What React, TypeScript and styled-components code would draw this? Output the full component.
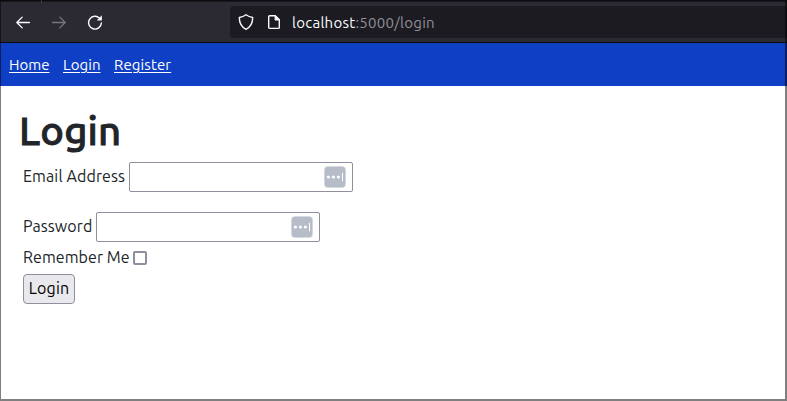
import React from "react";
import styled, { createGlobalStyle } from "styled-components";

const GlobalStyle = createGlobalStyle`
  *, *::before, *::after { box-sizing: border-box; }
  html, body { margin: 0; padding: 0; overflow: hidden; background: #fff; }
  body { font-family: Ubuntu, "Noto Sans", "Open Sans", sans-serif; font-size: 16px; color: #212529; }
`;

const Window = styled.div`
  position: relative;
  width: 787px;
  height: 401px;
  display: flex;
  flex-direction: column;
  background: #fff;
  &::after {
    content: "";
    position: absolute;
    inset: 0;
    border: solid rgba(0, 0, 0, 0.5);
    border-width: 1px 2px 2px 1px;
    pointer-events: none;
  }
`;

const BrowserBar = styled.header`
  flex: none;
  height: 43px;
  display: flex;
  align-items: center;
  padding-left: 15px;
  background: #2b2a33;
  border-top: 2px solid #18171d;
  border-bottom: 1px solid #0c0c0d;
`;

const TabEdge = styled.span`
  position: absolute;
  top: 0;
  left: 41px;
  width: 1px;
  height: 2px;
  background: #5b5a63;
`;

const ToolButton = styled.button<{ $dim?: boolean }>`
  width: 16px;
  height: 16px;
  margin: 0 20px 0 0;
  padding: 0;
  border: 0;
  background: none;
  color: ${(p) => (p.$dim ? "#77767d" : "#fbfbfe")};
  svg { display: block; }
`;

const AddressBar = styled.div`
  flex: 1;
  height: 32px;
  margin-left: 107px;
  padding-left: 8px;
  display: flex;
  align-items: center;
  border-radius: 4px 0 0 4px;
  background: #1c1b22;
  color: #fbfbfe;
  svg { flex: none; margin-right: 12px; }
`;

const Url = styled.span`
  margin: 2px 0 0 -2px;
  font-size: 15px;
  line-height: 20px;
  letter-spacing: 0.26px;
  white-space: nowrap;
`;

const UrlRest = styled.span`
  color: #8f8f96;
`;

const Nav = styled.nav`
  flex: none;
  height: 43px;
  padding: 0 0 0 9px;
  display: flex;
  align-items: center;
  gap: 13px;
  background: #0f3fc5;
`;

const NavLink = styled.a<{ $w: number; $spacing: number }>`
  width: ${(p) => p.$w}px;
  font-size: 15px;
  line-height: 20px;
  letter-spacing: ${(p) => p.$spacing}px;
  color: #fff;
  white-space: nowrap;
  text-decoration: underline;
  text-decoration-thickness: 1px;
  text-underline-offset: 2px;
`;

const Main = styled.main`
  padding: 21px 0 0 20px;
`;

const Title = styled.h1`
  margin: 0 0 0 -1px;
  height: 48px;
  font-size: 40px;
  line-height: 48px;
  font-weight: 500;
  letter-spacing: 0.2px;
  -webkit-text-stroke: 0.9px currentColor;
`;

const Form = styled.form`
  margin: 7px 0 0 3px;
`;

const Row = styled.div<{ $h: number; $gap: number }>`
  height: ${(p) => p.$h}px;
  margin-bottom: ${(p) => p.$gap}px;
  display: flex;
  align-items: center;
`;

const Label = styled.label<{ $w: number; $spacing: number }>`
  flex: none;
  width: ${(p) => p.$w}px;
  margin-bottom: 2px;
  line-height: 24px;
  letter-spacing: ${(p) => p.$spacing}px;
  white-space: nowrap;
`;

const Field = styled.div`
  width: 224px;
  height: 30px;
  display: flex;
  align-items: center;
  padding-right: 6px;
  border: 1px solid #8f8f9d;
  border-radius: 2px;
  background: #fff;
`;

const Input = styled.input`
  flex: 1;
  min-width: 0;
  height: 26px;
  border: 0;
  outline: 0;
  background: transparent;
  font: inherit;
`;

const Checkbox = styled.input`
  appearance: none;
  width: 14px;
  height: 14px;
  margin: 0;
  border: 2px solid #8f8f9d;
  border-radius: 2px;
  background: #fff;
`;

const Submit = styled.button`
  width: 52px;
  height: 30px;
  padding: 0 0 2px;
  border: 1px solid #8f8f9d;
  border-radius: 4px;
  background: #e9e9ed;
  color: #000;
  font: inherit;
  line-height: 26px;
  letter-spacing: 0.15px;
`;

const Back = () => (
  <svg width="16" height="16" viewBox="0 0 16 16" fill="none" stroke="currentColor" strokeWidth="1.3" strokeLinecap="round" strokeLinejoin="round">
    <path d="M14.4 8.500H1.800M7.200 3.100 1.800 8.500l5.400 5.400" />
  </svg>
);

const Forward = () => (
  <svg width="16" height="16" viewBox="0 0 16 16" fill="none" stroke="currentColor" strokeWidth="1.3" strokeLinecap="round" strokeLinejoin="round">
    <path d="M1.600 8.500h12.600M8.800 3.100 14.200 8.500l-5.400 5.400" />
  </svg>
);

const Reload = () => (
  <svg width="16" height="16" viewBox="0 0 16 16" fill="none">
    <path d="M12.600 4.200A6.400 6.400 0 1 0 14.400 9" stroke="currentColor" strokeWidth="1.4" strokeLinecap="round" />
    <path d="M14.900 1.300v4.600a.5.5 0 0 1-.5.5H9.800z" fill="currentColor" />
  </svg>
);

const Shield = () => (
  <svg width="16" height="16" viewBox="0 0 16 16" fill="none" stroke="currentColor" strokeWidth="1.4" strokeLinejoin="round">
    <path d="M8 .8c2 1.500 4.100 2.300 6.700 2.700C14.700 9 12.800 12.900 8 15.300 3.200 12.900 1.300 9 1.300 3.500 3.900 3.100 6 2.300 8 .8z" />
  </svg>
);

const Page = () => (
  <svg width="16" height="16" viewBox="0 0 16 16" fill="none">
    <path d="M3.700 1.700h5.500l4.100 4v7.700a1 1 0 0 1-1 1H3.700a1 1 0 0 1-1-1V2.700a1 1 0 0 1 1-1z" stroke="currentColor" strokeWidth="1.400" strokeLinejoin="round" />
    <path d="M8.600 1.200h1L13.800 5.400v1.200H9.400a.8.8 0 0 1-.8-.8z" fill="currentColor" />
  </svg>
);

const FillIcon = () => (
  <svg width="22" height="22" viewBox="0 0 22 22">
    <rect width="22" height="22" rx="4" fill="#dfe3e8" />
    <rect x="0.700" y="0.700" width="20.600" height="20.600" rx="3.500" fill="#b6bdc9" />
    <g fill="#fff">
      <circle cx="4.400" cy="11" r="1.600" />
      <circle cx="9.400" cy="11" r="1.600" />
      <circle cx="14.400" cy="11" r="1.600" />
      <rect x="18" y="6.800" width="1" height="8.400" />
    </g>
  </svg>
);

export default function App() {
  return (
    <Window>
      <GlobalStyle />
      <BrowserBar>
        <TabEdge />
        <ToolButton aria-label="Back"><Back /></ToolButton>
        <ToolButton aria-label="Forward" $dim><Forward /></ToolButton>
        <ToolButton aria-label="Reload"><Reload /></ToolButton>
        <AddressBar>
          <Shield />
          <Page />
          <Url>localhost<UrlRest>:5000/login</UrlRest></Url>
        </AddressBar>
      </BrowserBar>
      <Nav>
        <NavLink href="#" $w={41} $spacing={0}>Home</NavLink>
        <NavLink href="#" $w={38} $spacing={0.05}>Login</NavLink>
        <NavLink href="#" $w={57} $spacing={0.12}>Register</NavLink>
      </Nav>
      <Main>
        <Title>Login</Title>
        <Form onSubmit={(e) => e.preventDefault()}>
          <Row $h={30} $gap={20}>
            <Label htmlFor="email" $w={106} $spacing={0.12}>Email Address</Label>
            <Field><Input id="email" type="email" /><FillIcon /></Field>
          </Row>
          <Row $h={30} $gap={4}>
            <Label htmlFor="password" $w={73} $spacing={0.08}>Password</Label>
            <Field><Input id="password" type="password" /><FillIcon /></Field>
          </Row>
          <Row $h={24} $gap={4}>
            <Label htmlFor="remember" $w={110} $spacing={0.08}>Remember Me</Label>
            <Checkbox id="remember" type="checkbox" />
          </Row>
          <Submit type="submit">Login</Submit>
        </Form>
      </Main>
    </Window>
  );
}
